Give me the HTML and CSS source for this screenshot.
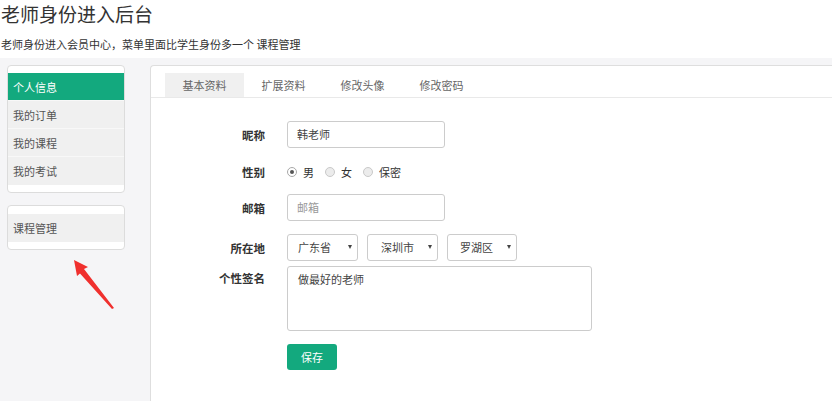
FILE: index.html
```html
<!DOCTYPE html>
<html lang="zh">
<head>
<meta charset="utf-8">
<link rel="stylesheet" href="styles.css">
</head>
<body>
<header class="head">
  <h1 class="title">老师身份进入后台</h1>
  <p class="sub">老师身份进入会员中心，菜单里面比学生身份多一个 课程管理</p>
</header>
<div class="main">
  <aside class="side">
    <ul class="card card-main">
      <li class="item active">个人信息</li>
      <li class="item">我的订单</li>
      <li class="item">我的课程</li>
      <li class="item">我的考试</li>
    </ul>
    <ul class="card card-extra">
      <li class="item">课程管理</li>
    </ul>
    <svg class="arrow" width="60" height="60" viewBox="0 0 60 60">
      <polygon points="4,2 7,18 10,15.5 42,51 44,50 14,11 18,9" fill="#f0302e"/>
    </svg>
  </aside>
  <section class="panel">
    <nav class="tabs">
      <span class="tab on">基本资料</span>
      <span class="tab">扩展资料</span>
      <span class="tab">修改头像</span>
      <span class="tab">修改密码</span>
    </nav>
    <form class="form">
      <div class="row">
        <label class="lbl">昵称</label>
        <div class="input">韩老师</div>
      </div>
      <div class="row row-radio">
        <label class="lbl">性别</label>
        <div class="radios">
          <span class="radio checked"></span><span class="rtxt">男</span>
          <span class="radio"></span><span class="rtxt">女</span>
          <span class="radio"></span><span class="rtxt">保密</span>
        </div>
      </div>
      <div class="row">
        <label class="lbl">邮箱</label>
        <div class="input placeholder">邮箱</div>
      </div>
      <div class="row row-loc">
        <label class="lbl">所在地</label>
        <div class="selects">
          <div class="select s1">广东省<i class="caret"></i></div>
          <div class="select s2">深圳市<i class="caret"></i></div>
          <div class="select s3">罗湖区<i class="caret"></i></div>
        </div>
      </div>
      <div class="row row-area">
        <label class="lbl">个性签名</label>
        <div class="textarea">做最好的老师</div>
      </div>
      <div class="row">
        <span class="lbl"></span>
        <button type="button" class="btn">保存</button>
      </div>
    </form>
  </section>
</div>
</body>
</html>
```
FILE: styles.css
```css
* { box-sizing: border-box; }
html, body { margin: 0; padding: 0; }
body {
  width: 832px;
  height: 401px;
  overflow: hidden;
  background: #fff;
  font-family: "Noto Sans CJK SC", "Noto Sans", sans-serif;
  font-size: 11px;
  color: #333;
}
.head { height: 58px; padding-left: 1px; }
.title {
  margin: 0;
  font-size: 19px;
  font-weight: normal;
  line-height: 28px;
  color: #333;
}
.sub {
  margin: 8px 0 0;
  line-height: 16px;
  font-size: 11px;
  color: #333;
}
.main {
  display: flex;
  height: 343px;
  background: #f5f5f7;
  padding-top: 7px;
}
.side {
  position: relative;
  width: 150px;
  flex: none;
  padding-left: 7px;
}
.card {
  list-style: none;
  margin: 0;
  width: 118px;
  background: #fff;
  border: 1px solid #dcdcdc;
  border-radius: 4px;
}
.card-main { padding: 7px 0 7px; }
.card-extra { margin-top: 12px; padding: 8px 0 7px; }
.item {
  height: 28px;
  line-height: 28px;
  padding-left: 5px;
  background: #f0f0f0;
  color: #555;
  border-bottom: 1px solid #f8f8f8;
}
.item:last-child { border-bottom: none; }
.item.active { background: #13a97e; color: #fff; }
.arrow {
  position: absolute;
  left: 70px;
  top: 193px;
}
.panel {
  flex: 1;
  margin-right: -10px;
  background: #fff;
  border: 1px solid #dedede;
  border-right: none;
  border-bottom: none;
  border-top-left-radius: 4px;
  padding-top: 7px;
}
.tabs {
  display: flex;
  padding-left: 14px;
  border-bottom: 1px solid #e9e9e9;
  height: 25px;
}
.tab {
  width: 79px;
  height: 24px;
  line-height: 24px;
  text-align: center;
  color: #666;
}
.tab.on { background: #f0f0f0; }
.form { padding: 23px 0 0 14px; }
.row {
  display: flex;
  align-items: center;
  margin-bottom: 13px;
}
.lbl {
  width: 100px;
  flex: none;
  text-align: right;
  font-weight: bold;
  font-size: 11.5px;
  color: #333;
  margin-right: 22px;
}
.input {
  width: 158px;
  height: 27px;
  line-height: 25px;
  border: 1px solid #ccc;
  border-radius: 3px;
  padding-left: 9px;
  color: #444;
}
.input.placeholder { color: #999; }
.row-radio { height: 21px; margin-bottom: 12px; }
.radios { display: flex; align-items: center; }
.radio {
  width: 10px;
  height: 10px;
  border-radius: 50%;
  border: 1px solid #c9c9c9;
  background: #ececec;
  position: relative;
}
.radio.checked { background: #fff; border-color: #a8a8a8; }
.radio.checked::after {
  content: "";
  position: absolute;
  left: 2px;
  top: 2px;
  width: 4px;
  height: 4px;
  border-radius: 50%;
  background: #555;
}
.rtxt { margin: 0 11px 0 6px; color: #333; }
.row-loc { margin-bottom: 5px; }
.selects { display: flex; gap: 9px; }
.select {
  position: relative;
  height: 27px;
  line-height: 25px;
  border: 1px solid #ccc;
  border-radius: 3px;
  padding-left: 10px;
  color: #444;
}
.s1 { width: 71px; }
.s2 { width: 71px; padding-left: 13px; }
.s3 { width: 70px; padding-left: 12px; }
.caret {
  position: absolute;
  right: 5px;
  top: 10px;
  width: 0;
  height: 0;
  border-left: 2.5px solid transparent;
  border-right: 2.5px solid transparent;
  border-top: 4px solid #444;
}
.row-area { align-items: flex-start; }
.row-area .lbl { margin-top: 4px; }
.textarea {
  width: 305px;
  height: 65px;
  border: 1px solid #ccc;
  border-radius: 3px;
  padding: 4px 10px;
  line-height: 16px;
  color: #444;
}
.btn {
  width: 50px;
  height: 26px;
  border: none;
  border-radius: 3px;
  background: #13a97e;
  color: #fff;
  font-family: inherit;
  font-size: 11px;
  padding: 0;
}
```
